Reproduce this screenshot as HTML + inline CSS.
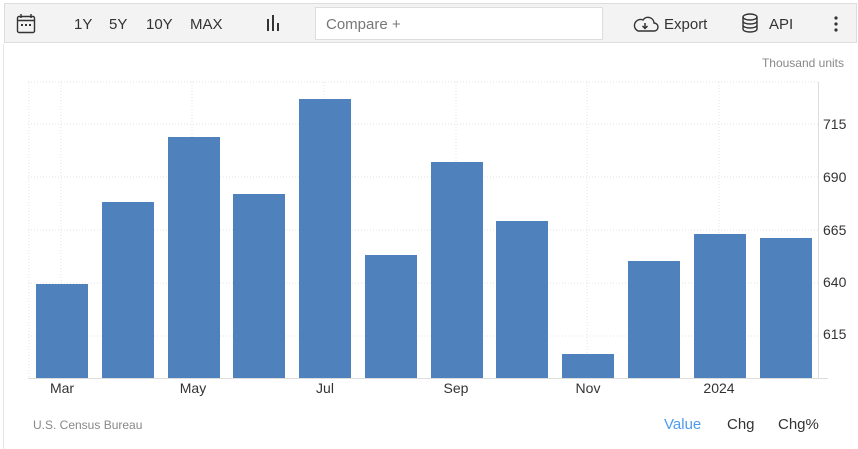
<!DOCTYPE html>
<html><head><style>
body{margin:0;width:858px;height:449px;background:#fff;font-family:"Liberation Sans",sans-serif;position:relative;overflow:hidden}
.tb{position:absolute;left:4px;top:3px;width:853px;height:40px;background:#f3f3f3;border:1px solid #ddd;box-sizing:border-box}
.t{position:absolute;font-size:15px;color:#333;top:15px}
.lb{position:absolute;left:3px;top:44px;width:1px;height:405px;background:#e6e6e6}
</style></head><body>
<div class="tb"></div>
<div class="lb"></div>
<svg style="position:absolute;left:0;top:0" width="858" height="449">
<g fill="none" stroke="#333" stroke-width="1.4">
<rect x="17.5" y="16.5" width="17" height="16" rx="1.5"/><line x1="17.5" y1="20.5" x2="34.5" y2="20.5"/><line x1="21" y1="14" x2="21" y2="18"/><line x1="31" y1="14" x2="31" y2="18"/>
</g>
<g fill="#333"><rect x="21" y="24" width="2" height="2"/><rect x="25" y="24" width="2" height="2"/><rect x="29" y="24" width="2" height="2"/>
<rect x="267" y="19" width="2" height="12"/><rect x="272" y="15" width="2" height="16"/><rect x="277" y="23" width="2" height="8"/></g>
<rect x="315.5" y="7.5" width="287" height="32" fill="#fff" stroke="#ddd"/>
<g fill="none" stroke="#333" stroke-width="1.4"><path d="M638 31h16a4 4 0 0 0 0-8a6 6 0 0 0-11-3a5 5 0 0 0-5 11z"/>
<ellipse cx="750" cy="17" rx="7" ry="3"/><path d="M743 17v12c0 4 14 4 14 0v-12M743 21c0 4 14 4 14 0M743 25c0 4 14 4 14 0"/></g>
<path d="M645 23v5M642.5 26l2.5 2.5 2.5-2.5" stroke="#333" stroke-width="1.5" fill="none"/>
<g fill="#333"><circle cx="836" cy="18" r="1.6"/><circle cx="836" cy="24" r="1.6"/><circle cx="836" cy="30" r="1.6"/></g>
<g stroke="#e3e3e3" stroke-dasharray="1,2">
<line x1="28" y1="82" x2="818" y2="82"/><line x1="28" y1="124" x2="818" y2="124"/><line x1="28" y1="177" x2="818" y2="177"/><line x1="28" y1="230" x2="818" y2="230"/><line x1="28" y1="283" x2="818" y2="283"/><line x1="28" y1="336" x2="818" y2="336"/>
<line x1="29" y1="82" x2="29" y2="378"/><line x1="61" y1="82" x2="61" y2="378"/><line x1="192" y1="82" x2="192" y2="378"/><line x1="324" y1="82" x2="324" y2="378"/><line x1="456" y1="82" x2="456" y2="378"/><line x1="587" y1="82" x2="587" y2="378"/><line x1="719" y1="82" x2="719" y2="378"/>
</g>
<line x1="818.5" y1="82" x2="818.5" y2="378" stroke="#ddd"/>
<line x1="28" y1="378.5" x2="828" y2="378.5" stroke="#ddd"/>
<g fill="#4f81bd">
<rect x="36" y="284" width="52" height="94"/><rect x="102" y="202" width="52" height="176"/><rect x="168" y="137" width="52" height="241"/><rect x="233" y="194" width="52" height="184"/><rect x="299" y="99" width="52" height="279"/><rect x="365" y="255" width="52" height="123"/><rect x="431" y="162" width="52" height="216"/><rect x="496" y="221" width="52" height="157"/><rect x="562" y="354" width="52" height="24"/><rect x="628" y="261" width="52" height="117"/><rect x="694" y="234" width="52" height="144"/><rect x="760" y="238" width="52" height="140"/>
</g>
<g font-family="Liberation Sans,sans-serif" font-size="15" fill="#333">
<text x="74" y="29">1Y</text><text x="109" y="29">5Y</text><text x="146" y="29">10Y</text><text x="190" y="29">MAX</text>
<text x="664" y="29">Export</text><text x="769" y="29">API</text>
</g>
<text x="326" y="29" font-family="Liberation Sans,sans-serif" font-size="15" fill="#777">Compare +</text>
<text x="844" y="67" text-anchor="end" font-family="Liberation Sans,sans-serif" font-size="12" fill="#888">Thousand units</text>
<g font-family="Liberation Sans,sans-serif" font-size="14" fill="#333">
<text x="823" y="129">715</text><text x="823" y="182">690</text><text x="823" y="235">665</text><text x="823" y="287">640</text><text x="823" y="339">615</text>
<text x="62" y="393" text-anchor="middle">Mar</text><text x="193" y="393" text-anchor="middle">May</text><text x="325" y="393" text-anchor="middle">Jul</text><text x="456" y="393" text-anchor="middle">Sep</text><text x="588" y="393" text-anchor="middle">Nov</text><text x="719" y="393" text-anchor="middle">2024</text>
</g>
<text x="33" y="429" font-family="Liberation Sans,sans-serif" font-size="12" fill="#888">U.S. Census Bureau</text>
<g font-family="Liberation Sans,sans-serif" font-size="15">
<text x="664" y="429" fill="#4c9cf0">Value</text><text x="727" y="429" fill="#333">Chg</text><text x="778" y="429" fill="#333">Chg%</text>
</g>
</svg>
</body></html>
